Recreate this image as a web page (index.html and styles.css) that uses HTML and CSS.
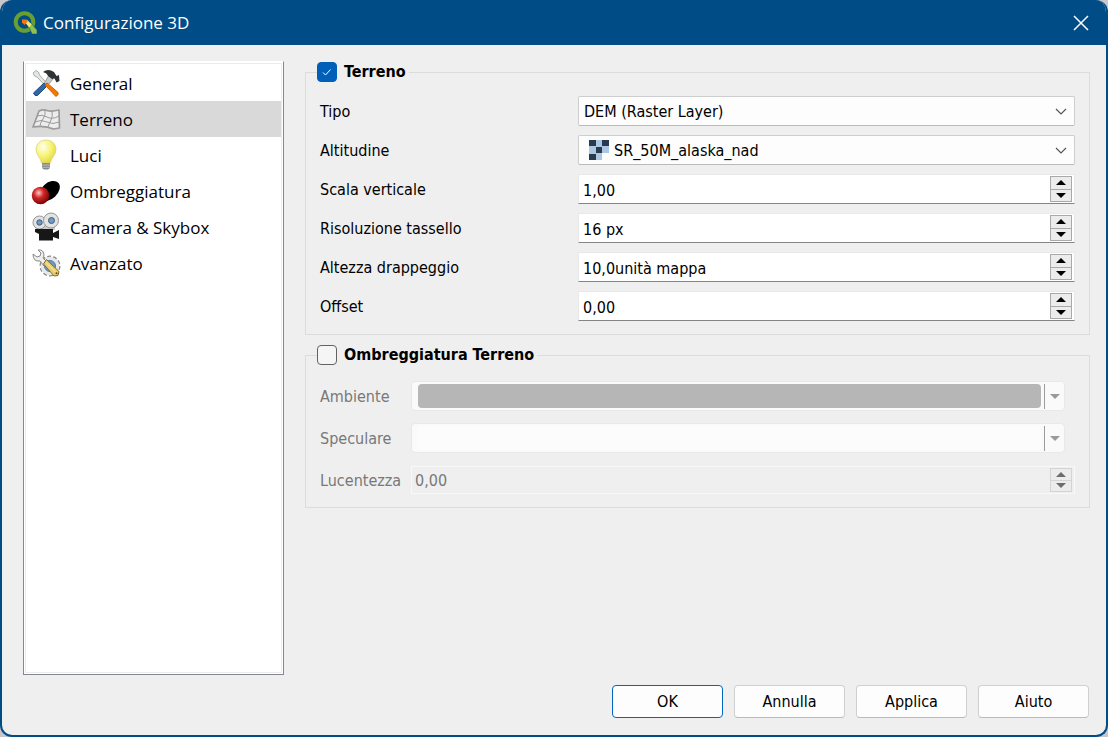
FILE: index.html
```html
<!DOCTYPE html>
<html lang="it">

<head>
  <meta charset="UTF-8">
  <meta name="viewport" content="width=device-width, initial-scale=1.0">
  <title>Configurazione 3D</title>

  <link rel="stylesheet" href="styles.css">
</head>

<body>
  <div class="dialog">
    <header class="titlebar">
      <svg class="logo" viewBox="0 0 24 24">
        <circle cx="11.500" cy="11" r="8.800" fill="none" stroke="#689f30" stroke-width="4" />
        <path d="M15 14l2.500-2.500L24 19v4h-5z" fill="#8fc050" stroke="#004c87" stroke-width=".5" />
        <path d="M12 11l2.500-2 4 4.500-2.500 3z" fill="#f3e86b" />
        <path d="M9 8.500h4.500l1.500 1.500-3.500 4-2.500-2.500z" fill="#ee7913" />
      </svg>
      <h1>Configurazione 3D</h1>
      <button class="close" aria-label="Chiudi">
        <svg viewBox="0 0 16 16"><path d="M1 1l14 14M15 1L1 15" /></svg>
      </button>
    </header>

    <main class="content">
      <nav class="pages">
        <button class="page">
          <svg viewBox="0 0 28 28">
            <path d="M4 1.500l2.500 1.500 1 3 8 9-2 2-8.500-9-2.500-1L1 4z" fill="#e4e6e4" stroke="#999c99" stroke-width=".8" />
            <path d="M12 14l3 3-9.500 9.500q-3 1-4-2.500z" fill="#3465a4" stroke="#204a87" />
            <path d="M17 6l4 4-5 6-3.500-2z" fill="#c9ccc9" stroke="#888a85" stroke-width=".8" />
            <path d="M11 3q5-4 11 0l2.500 4 2.500-1 .5 6-3 1.500-2-4-2.500.5-4-3q-1-3-5-4z" fill="#2e3436" />
            <path d="M15 14l11 9.500q1 2-2 4L13 16z" fill="#f57900" stroke="#ce5c00" />
          </svg>
          <span>General</span>
        </button>
        <button class="page selected">
          <svg viewBox="0 0 28 28" fill="none" stroke="#9b9b9b" stroke-linejoin="round">
            <path d="M7 6q4-2 8-.5t12-.5l.500 18-6 1q-9-4-20.500-2z" fill="#ededed" stroke-width="1.700" />
            <path d="M5 11q5-2 10 1t12-1M3 17q6-3 12 0t12 0M13 5q1 5-2 9t-3 7M20 6q1 5-1 9t-3 7" stroke-width="1" />
          </svg>
          <span>Terreno</span>
        </button>
        <button class="page">
          <svg viewBox="0 0 28 28">
            <defs>
              <radialGradient id="bulb" cx=".35" cy=".3" r=".7">
                <stop offset="0" stop-color="#fffff0" />
                <stop offset=".55" stop-color="#f8f47a" />
                <stop offset="1" stop-color="#e6da49" />
              </radialGradient>
            </defs>
            <path d="M14-1C8-1 4 3 4 8.500 4 14 9 17 9.500 22h9C19 17 24 14 24 8.500 24 3 20-1 14-1z" fill="url(#bulb)" stroke="#d7d07a" stroke-width=".7" />
            <path d="M10 22h8v5l-2 1.500h-4L10 27z" fill="#888a8c" />
            <path d="M10 24h8M10 26.300h8" stroke="#b9bbbd" />
          </svg>
          <span>Luci</span>
        </button>
        <button class="page">
          <svg viewBox="0 0 28 28">
            <defs>
              <radialGradient id="ball" cx=".4" cy=".35" r=".65">
                <stop offset="0" stop-color="#ffc4c4" />
                <stop offset=".45" stop-color="#cf2626" />
                <stop offset="1" stop-color="#7d0606" />
              </radialGradient>
            </defs>
            <ellipse cx="17.500" cy="14" rx="12" ry="8" transform="rotate(-43 17.500 14)" />
            <circle cx="8.500" cy="18.500" r="8.700" fill="url(#ball)" />
          </svg>
          <span>Ombreggiatura</span>
        </button>
        <button class="page">
          <svg viewBox="0 0 28 28">
            <path d="M5 13h18v4H5z" fill="#ccc" />
            <circle cx="7.500" cy="9.500" r="6.500" fill="#e3e3e1" stroke="#969696" />
            <circle cx="19" cy="7.500" r="7.500" fill="#e3e3e1" stroke="#969696" />
            <circle cx="7.500" cy="9.500" r="2.700" fill="#6d9bcb" stroke="#41597a" />
            <circle cx="19.500" cy="7.500" r="3" fill="#6d9bcb" stroke="#41597a" />
            <path d="M3 16h18v4l6-3v9l-6-2v3.500H7V21l-4-2z" fill="#171717" />
          </svg>
          <span>Camera &amp; Skybox</span>
        </button>
        <button class="page">
          <svg viewBox="0 0 28 28">
            <circle cx="18" cy="17" r="9" fill="#e8e8e6" stroke="#8a8a8a" stroke-width="3" stroke-dasharray="3.600 2.050" />
            <circle cx="18" cy="17" r="9.300" fill="#e8e8e6" />
            <circle cx="18" cy="17" r="5.500" fill="#6d9bcb" stroke="#55789c" />
            <path d="M1 5l4 3 3-1 1-3-3-3q6-1 6 6l-1 2 4 4-3 4-4-5q-7 1-7-7z" fill="#eee" stroke="#888" />
            <path d="M14.500 10.500L27 22.500l-1 4-4 .5-10.500-12z" fill="#e9cd6d" stroke="#7b6b36" />
            <path d="M14 13.500l10 10" stroke="#fff0b0" />
            <circle cx="24.500" cy="24.300" r="1" fill="#5a4b1c" />
          </svg>
          <span>Avanzato</span>
        </button>
      </nav>

      <div class="settings">
        <fieldset class="group">
          <legend>
            <label class="toggle">
              <input type="checkbox" checked>
              <svg class="tick" viewBox="0 0 20 20"><path d="M6 10.500l2.500 2.500 5-5.500" /></svg>
              Terreno
            </label>
          </legend>
          <div class="form">
            <label for="tipo">Tipo</label>
            <div class="combo">
              <select id="tipo"><option>DEM (Raster Layer)</option></select>
              <svg class="chevron" viewBox="0 0 12 8"><path d="M1 1l5 5 5-5" /></svg>
            </div>

            <label for="altitudine">Altitudine</label>
            <div class="combo with-icon">
              <svg class="raster" viewBox="0 0 20 20" shape-rendering="crispEdges">
                <path d="M0 0h20v13h-7v7H0z" fill="#adc6e4" />
                <path d="M0 0h7v6H0zM13 0h7v6h-7zM7 7h6v6H7zM0 14h7v6H0z" fill="#293a4e" />
              </svg>
              <select id="altitudine"><option>SR_50M_alaska_nad</option></select>
              <svg class="chevron" viewBox="0 0 12 8"><path d="M1 1l5 5 5-5" /></svg>
            </div>

            <label for="scala">Scala verticale</label>
            <div class="spin">
              <input type="text" id="scala" value="1,00">
              <div class="steps">
                <button aria-label="Aumenta"><svg viewBox="0 0 10 5"><path d="M0 5l5-5 5 5z" /></svg></button>
                <button aria-label="Diminuisci"><svg viewBox="0 0 10 5"><path d="M0 0l5 5 5-5z" /></svg></button>
              </div>
            </div>

            <label for="risoluzione">Risoluzione tassello</label>
            <div class="spin">
              <input type="text" id="risoluzione" value="16 px">
              <div class="steps">
                <button aria-label="Aumenta"><svg viewBox="0 0 10 5"><path d="M0 5l5-5 5 5z" /></svg></button>
                <button aria-label="Diminuisci"><svg viewBox="0 0 10 5"><path d="M0 0l5 5 5-5z" /></svg></button>
              </div>
            </div>

            <label for="drappeggio">Altezza drappeggio</label>
            <div class="spin">
              <input type="text" id="drappeggio" value="10,0unità mappa">
              <div class="steps">
                <button aria-label="Aumenta"><svg viewBox="0 0 10 5"><path d="M0 5l5-5 5 5z" /></svg></button>
                <button aria-label="Diminuisci"><svg viewBox="0 0 10 5"><path d="M0 0l5 5 5-5z" /></svg></button>
              </div>
            </div>

            <label for="offset">Offset</label>
            <div class="spin">
              <input type="text" id="offset" value="0,00">
              <div class="steps">
                <button aria-label="Aumenta"><svg viewBox="0 0 10 5"><path d="M0 5l5-5 5 5z" /></svg></button>
                <button aria-label="Diminuisci"><svg viewBox="0 0 10 5"><path d="M0 0l5 5 5-5z" /></svg></button>
              </div>
            </div>
          </div>
        </fieldset>

        <!-- controls inside the legend stay enabled -->
        <fieldset class="group shading" disabled>
          <legend>
            <label class="toggle">
              <input type="checkbox">
              Ombreggiatura Terreno
            </label>
          </legend>
          <div class="form">
            <label for="ambiente">Ambiente</label>
            <div class="color">
              <button class="swatch grey" id="ambiente"></button>
              <button class="menu" aria-label="Menu ambiente"><svg viewBox="0 0 10 5"><path d="M0 0l5 5 5-5z" /></svg></button>
            </div>

            <label for="speculare">Speculare</label>
            <div class="color">
              <button class="swatch" id="speculare"></button>
              <button class="menu" aria-label="Menu speculare"><svg viewBox="0 0 10 5"><path d="M0 0l5 5 5-5z" /></svg></button>
            </div>

            <label for="lucentezza">Lucentezza</label>
            <div class="spin">
              <input type="text" id="lucentezza" value="0,00">
              <div class="steps">
                <button aria-label="Aumenta"><svg viewBox="0 0 10 5"><path d="M0 5l5-5 5 5z" /></svg></button>
                <button aria-label="Diminuisci"><svg viewBox="0 0 10 5"><path d="M0 0l5 5 5-5z" /></svg></button>
              </div>
            </div>
          </div>
        </fieldset>
      </div>
    </main>

    <footer class="actions">
      <button class="default">OK</button>
      <button>Annulla</button>
      <button>Applica</button>
      <button>Aiuto</button>
    </footer>
  </div>
</body>

</html>
```
FILE: styles.css
```css
* {
  box-sizing: border-box;
}

body {
  margin: 0;
  background-color: #c8c8cc;
  font-family: "DejaVu Sans Condensed", "Noto Sans", sans-serif;
  font-size: 16px;
  line-height: 20px;
  color: #000;
}

button,
input,
select {
  font: inherit;
  color: inherit;
  margin: 0;
}

svg {
  display: block;
  flex: none;
}

.dialog {
  display: flex;
  flex-direction: column;
  min-height: 100vh;
  background-color: #efefef;
  border: 2px solid #004c87;
  border-top: none;
  border-radius: 12px;
  overflow: hidden;
}

.titlebar {
  display: flex;
  align-items: center;
  height: 45px;
  padding: 0 17px 0 11px;
  background-color: #004c87;
  color: #fff;
}

.titlebar h1 {
  flex: 1;
  margin: 0 0 0 6px;
  font-family: "Open Sans", sans-serif;
  font-size: 17px;
  font-weight: normal;
}

.logo {
  width: 24px;
  height: 24px;
}

.close {
  padding: 0;
  border: none;
  background: none;
}

.close svg {
  width: 16px;
  height: 16px;
  fill: none;
  stroke: #fff;
  stroke-width: 1.5;
}

.content {
  flex: 1;
  display: grid;
  grid-template-columns: 261px 1fr;
  gap: 21px;
  padding: 16px 16px 0 21px;
}

.pages {
  display: flex;
  flex-direction: column;
  padding: 3px 2px;
  background-color: #fff;
  border: 1px solid #828790;
  border-top-color: #fff;
  box-shadow: inset 0 0 0 1px #fff, inset 0 0 0 2px #ececec;
}

.page {
  display: flex;
  align-items: center;
  gap: 10px;
  height: 36px;
  padding: 0 6px;
  border: none;
  background: none;
  font-family: "Open Sans", sans-serif;
  font-size: 17px;
  text-align: left;
}

.page svg {
  width: 28px;
  height: 28px;
  overflow: visible;
}

.page span {
  padding-top: 1px;
}

.page.selected {
  background-color: #d9d9d9;
}

.settings {
  display: flex;
  flex-direction: column;
  gap: 9px;
}

.group {
  min-width: 0;
  margin: 0;
  padding: 13px 14px;
  border: 1px solid #dcdcdc;
}

.group legend {
  margin-left: -3px;
  padding: 0 3px 0 0;
  font-weight: bold;
}

.toggle {
  position: relative;
  display: flex;
  align-items: center;
  gap: 7px;
  height: 22px;
}

.toggle input {
  appearance: none;
  width: 20px;
  height: 20px;
  border: 1px solid #626262;
  border-radius: 4px;
  background-color: #f5f5f5;
}

.toggle input:checked {
  border-color: #005fb8;
  background-color: #005fb8;
}

.tick {
  position: absolute;
  left: 0;
  width: 20px;
  height: 20px;
  fill: none;
  stroke: #fff;
  pointer-events: none;
}

.toggle input:not(:checked) + .tick {
  display: none;
}

.form {
  display: grid;
  grid-template-columns: 258px 1fr;
  grid-auto-rows: 30px;
  row-gap: 9px;
  align-items: center;
}

.form label {
  padding-top: 2px;
}

.combo {
  position: relative;
  height: 30px;
}

.combo select {
  appearance: none;
  width: 100%;
  height: 100%;
  padding: 2px 30px 0 5px;
  background-color: #fdfdfd;
  border: 1px solid #cecece;
  border-bottom-color: #bababa;
  border-radius: 2px;
}

.combo.with-icon select {
  padding-left: 35px;
}

.raster {
  position: absolute;
  left: 11px;
  top: 5px;
  width: 20px;
  height: 20px;
}

.chevron {
  position: absolute;
  right: 8px;
  top: 12px;
  width: 12px;
  height: 8px;
  fill: none;
  stroke: #555;
  stroke-width: 1.2;
  pointer-events: none;
}

.spin {
  display: flex;
  height: 30px;
  padding: 1px 2px 1px 0;
  background-color: #fff;
  border: 1px solid #e9e9e9;
  border-bottom-color: #858585;
}

.spin input {
  flex: 1;
  min-width: 0;
  padding: 4px 4px 0;
  border: none;
  background: none;
  outline: none;
}

.steps {
  display: flex;
  flex-direction: column;
  width: 22px;
  border: 1px solid #a9a9a9;
}

.steps button {
  flex: 1;
  display: flex;
  align-items: center;
  justify-content: center;
  padding: 0;
  border: none;
  background-color: #ececec;
}

.steps button + button {
  border-top: 1px solid #a9a9a9;
}

.steps svg {
  width: 10px;
  height: 5px;
}

.shading {
  padding: 15px 14px 12px;
  color: #787878;
}

.shading legend {
  color: #000;
}

.shading .form {
  grid-template-columns: 91px 1fr;
  row-gap: 12px;
}

.color {
  display: flex;
  align-items: center;
  height: 30px;
  margin-right: 10px;
  padding: 0 0 0 6px;
  background-color: #fafafa;
  border: 1px solid #e9e9e9;
  border-radius: 4px;
}

.swatch {
  flex: 1;
  height: 24px;
  border: none;
  border-radius: 4px;
  background-color: #fcfcfc;
}

.swatch.grey {
  background-color: #b6b6b6;
}

.menu {
  width: 20px;
  height: 25px;
  margin-left: 3px;
  padding: 0 5px;
  border: none;
  border-left: 1px solid #9b9b9b;
  background: none;
}

.menu svg {
  width: 10px;
  height: 5px;
  fill: #9a9a9a;
}

.shading .spin {
  height: 28px;
  background-color: #efefef;
  border-color: #f8f8f8;
}

.shading .spin input {
  padding: 1px 3px 0;
}

.shading .steps,
.shading .steps button {
  border-color: #d4d4d4;
}

.shading .steps svg {
  fill: #6d6d6d;
}

.actions {
  display: flex;
  justify-content: flex-end;
  gap: 11px;
  padding: 10px 17px 17px;
}

.actions button {
  width: 111px;
  height: 33px;
  padding: 1px 0 0;
  background-color: #fdfdfd;
  border: 1px solid #d0d0d0;
  border-bottom-color: #bababa;
  border-radius: 4px;
}

.actions .default {
  border-color: #0067c0;
}
```
